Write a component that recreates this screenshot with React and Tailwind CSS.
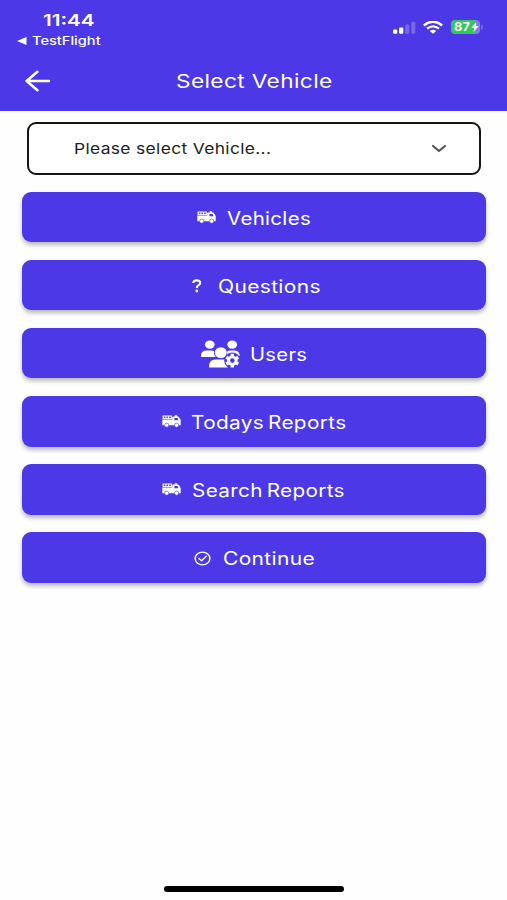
import React from "react";

function FireTruck() {
  return (
    <svg className="block h-[13px] w-[19px]" viewBox="0 0 19 13" fill="none">
      <path d="M0.5 1h9.5M0.5 3.4h9.5M1.2 1v2.4M3.9 1v2.4M6.6 1v2.4M9.4 1v2.4" stroke="#fff" strokeWidth="1" />
      <path
        fill="#fff"
        fillRule="evenodd"
        d="M.3 4.6h9.9V2.3q0-.8.9-.8h1.6V.3h2.4v1.2h.9q.8 0 1.1.7L18.7 5v5.3H.3zM12.4 3v2.3h4.1L15.5 3z"
      />
      <circle cx="4.7" cy="10.2" r="2.1" fill="#fff" stroke="#4c38e6" strokeWidth=".6" />
      <circle cx="14.6" cy="10.2" r="2.1" fill="#fff" stroke="#4c38e6" strokeWidth=".6" />
    </svg>
  );
}

function CheckRing() {
  return (
    <svg className="block h-[15px] w-[17px]" viewBox="0 0 24 24" preserveAspectRatio="none" fill="none" stroke="#fff" strokeWidth="2.1" strokeLinecap="round" strokeLinejoin="round">
      <ellipse cx="12" cy="12" rx="10.4" ry="10.2" />
      <path d="M17.5 8.2 10.8 15.6 7 12" />
    </svg>
  );
}

function Question() {
  return (
    <svg className="block h-[14px] w-[10px]" viewBox="0 0 10 14" fill="none">
      <path d="M1.2 4Q1.5 1.4 4.7 1.4q3.5 0 3.5 2.5 0 1.3-1.7 2.2Q4.8 7 4.8 9" stroke="#fff" strokeWidth="2.1" />
      <circle cx="4.8" cy="12" r="1.4" fill="#fff" />
    </svg>
  );
}

function UsersGear() {
  return (
    <svg className="block h-[28px] w-[39px]" viewBox="0 0 39 28" fill="#fff">
      <ellipse cx="8.8" cy="4.6" rx="4.9" ry="4.2" />
      <ellipse cx="31.2" cy="4.6" rx="4.9" ry="4.2" />
      <path d="M0 17v-1.8q.4-4.7 5.4-4.7h5.2q1.6 0 2.4.7-.8 3.4 1.6 5.8z" />
      <path d="M26.3 11.4q1-.9 2.7-.9h4.5q4.5 0 5.4 5.3H26z" />
      <ellipse cx="19.8" cy="12.6" rx="6" ry="5.4" />
      <path d="M8 27.6v-2q.5-6 6.5-6h9.8q2 0 2.5 8z" />
      <circle cx="31.3" cy="20.6" r="8.1" fill="#4c38e6" />
      <g stroke="#fff" strokeWidth="3.4">
        <path d="M31.3 13.8v13.6M25.3 17.2l12 6.8M25.3 24l12-6.8" />
      </g>
      <circle cx="31.3" cy="20.6" r="5.2" />
      <circle cx="31.3" cy="20.6" r="2.3" fill="#4c38e6" />
    </svg>
  );
}

const items = [
  { text: "Vehicles", icon: <FireTruck />, pad: "pl-[175px]", gap: "w-[30px]", label: "scale-x-[1.135]" },
  { text: "Questions", icon: <Question />, pad: "pl-[170px]", gap: "w-[26px]", label: "scale-x-[1.165]" },
  { text: "Users", icon: <UsersGear />, pad: "pl-[179px]", gap: "w-[49px]", label: "scale-x-[1.12]" },
  { text: "Todays Reports", icon: <FireTruck />, pad: "pl-[140px]", gap: "w-[29px]", label: "scale-x-[1.155] [word-spacing:-2px]" },
  { text: "Search Reports", icon: <FireTruck />, pad: "pl-[140px]", gap: "w-[30px]", label: "scale-x-[1.15] [word-spacing:-2px]" },
  { text: "Continue", icon: <CheckRing />, pad: "pl-[172px]", gap: "w-[29px]", label: "scale-x-[1.165]" },
];

export default function App() {
  return (
    <div className="flex h-[900px] w-[507px] flex-col overflow-hidden bg-[#fefefe] font-['Inter',sans-serif] text-white">
      <header className="h-[110.5px] shrink-0 bg-[#4c38e6]">
        <div className="flex h-[54px] justify-between">
          <div className="pl-[17px]">
            <div className="mt-[10px] ml-[26px] h-5 w-[52px] origin-left scale-x-[1.29] text-[16px] leading-5 font-semibold whitespace-nowrap">11:44</div>
            <div className="mt-[3px] flex h-4 items-center">
              <svg className="h-[8px] w-[10px]" viewBox="0 0 10 8"><path d="M0 4 9.5 0v8z" fill="#fff" /></svg>
              <span className="ml-[5px] origin-left scale-x-[1.27] text-[11.5px] leading-4 font-medium">TestFlight</span>
            </div>
          </div>
          <div className="mt-[20px] mr-[24px] flex h-[14px] items-center">
            <svg className="h-[13px] w-[23px]" viewBox="0 0 23 13" fill="#fff">
              <rect x="0" y="8.5" width="4.3" height="4.2" rx="1.2" />
              <rect x="6" y="6.4" width="4.3" height="6.3" rx="1.2" />
              <rect x="12.2" y="3.6" width="4" height="9.1" rx="1.2" opacity=".25" />
              <rect x="18.3" y=".8" width="4" height="11.9" rx="1.2" opacity=".25" />
            </svg>
            <svg className="ml-[7px] h-[13px] w-[20px]" viewBox="0 0 20 13" fill="none" stroke="#fff">
              <path d="M.8 4.5Q10-3 19.2 4.5" strokeWidth="2.4" />
              <path d="M4 7.7q6-4.6 12 0" strokeWidth="2.3" />
              <path d="M10 12.8 6.8 10q3.2-2.4 6.4 0z" fill="#fff" stroke="none" />
            </svg>
            <div className="ml-[8px] flex h-[14px] w-[29px] items-center overflow-hidden rounded-[4px] bg-[linear-gradient(90deg,#35c759_87%,#8478ec_87%)] pl-[3px]">
              <span className="w-[16px] origin-left scale-x-[1.12] text-[11.5px] leading-[14px] font-bold">87</span>
              <svg className="ml-[1px] h-[10px] w-[8px]" viewBox="0 0 8 10"><path d="M5.2 0 .3 5.7h3L2.5 10 7.7 4.1h-3z" fill="#fff" /></svg>
            </div>
            <div className="ml-px h-[5px] w-[2px] rounded-r-full bg-[#7869ed]" />
          </div>
        </div>
        <div className="flex h-[54px] items-center pl-[25px]">
          <svg className="h-[22px] w-[26px]" viewBox="0 0 26 22" fill="none" stroke="#fff" strokeWidth="2.5" strokeLinecap="round" strokeLinejoin="round">
            <path d="M24 11H1.6M12.4 1.8 1.6 11l10.8 9.2" />
          </svg>
          <h1 className="ml-[125px] origin-left scale-x-[1.225] text-[18.5px] leading-6 font-normal tracking-[0.3px] whitespace-nowrap">Select Vehicle</h1>
        </div>
      </header>

      <div className="mt-[11px] ml-[27px] flex h-[53px] w-[454px] shrink-0 items-center rounded-[9px] border-2 border-[#151515] bg-white pr-[32px] pl-[45px] text-[#222]">
        <span className="origin-left scale-x-[1.16] pt-[2px] text-[15px] tracking-[0.3px] whitespace-nowrap">Please select Vehicle...</span>
        <svg className="ml-auto h-[9px] w-[16px]" viewBox="0 0 16 9" fill="none" stroke="#555" strokeWidth="2.2" strokeLinecap="round" strokeLinejoin="round">
          <path d="m2 2 6 5 6-5" />
        </svg>
      </div>

      <main className="mt-[17.3px] ml-[22px] flex w-[464px] flex-col gap-[17.6px]">
        {items.map((item) => (
          <button key={item.text} className={`flex h-[50.5px] items-center rounded-[9px] bg-[#4c38e6] shadow-[0_3px_4px_rgba(0,0,0,0.28)] ${item.pad}`}>
            <span className={`shrink-0 pt-px ${item.gap}`}>{item.icon}</span>
            <span className={`origin-left pt-[3px] text-[18px] leading-6 tracking-[0.3px] whitespace-nowrap ${item.label}`}>{item.text}</span>
          </button>
        ))}
      </main>

      <div className="mt-auto mb-[8.5px] ml-[164px] h-[5.5px] w-[180px] shrink-0 rounded-full bg-black" />
    </div>
  );
}
